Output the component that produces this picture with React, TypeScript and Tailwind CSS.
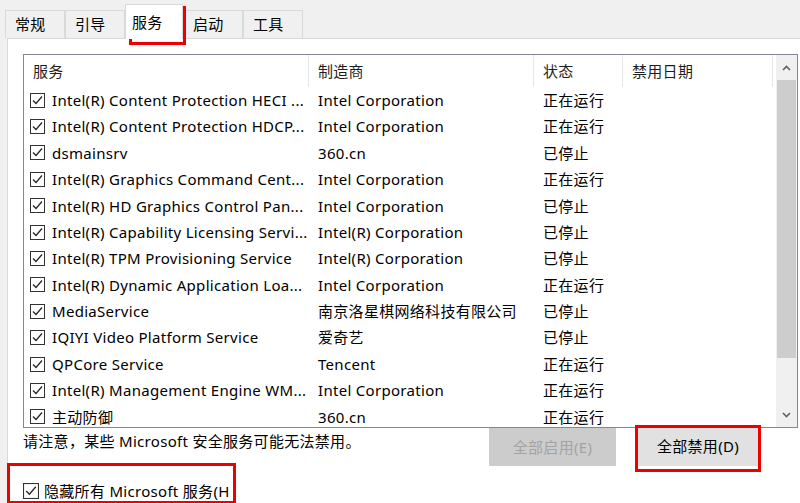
import React from "react"

type Row = { name: string; maker: string; status: string }

const rows: Row[] = [
  { name: "Intel(R) Content Protection HECI ...", maker: "Intel Corporation", status: "正在运行" },
  { name: "Intel(R) Content Protection HDCP...", maker: "Intel Corporation", status: "正在运行" },
  { name: "dsmainsrv", maker: "360.cn", status: "已停止" },
  { name: "Intel(R) Graphics Command Cent...", maker: "Intel Corporation", status: "正在运行" },
  { name: "Intel(R) HD Graphics Control Pan...", maker: "Intel Corporation", status: "已停止" },
  { name: "Intel(R) Capability Licensing Servi...", maker: "Intel(R) Corporation", status: "已停止" },
  { name: "Intel(R) TPM Provisioning Service", maker: "Intel(R) Corporation", status: "已停止" },
  { name: "Intel(R) Dynamic Application Loa...", maker: "Intel Corporation", status: "正在运行" },
  { name: "MediaService", maker: "南京洛星棋网络科技有限公司", status: "已停止" },
  { name: "IQIYI Video Platform Service", maker: "爱奇艺", status: "已停止" },
  { name: "QPCore Service", maker: "Tencent", status: "正在运行" },
  { name: "Intel(R) Management Engine WM...", maker: "Intel Corporation", status: "正在运行" },
  { name: "主动防御", maker: "360.cn", status: "正在运行" },
]

const Check = ({ size = 15 }: { size?: number }) => (
  <svg width={size} height={size} viewBox="0 0 15 15" className="shrink-0">
    <rect x="0.5" y="0.5" width="14" height="14" fill="#fff" stroke="#333" />
    <path d="M3 7.5 L6 10.5 L12 3.5" fill="none" stroke="#222" strokeWidth="1.2" />
  </svg>
)

const tabs = ["常规", "引导", "服务", "启动", "工具"]

export default function App() {
  return (
    <div className="relative h-[503px] w-[800px] overflow-hidden bg-[#f0f0f0] font-['Noto_Sans','Noto_Sans_CJK_SC',sans-serif] text-[15px] tracking-[0.3px] text-black">
      {/* tabs */}
      <div className="flex h-[38px] items-end pl-[5px]">
        {tabs.map((t) =>
          t === "服务" ? (
            <div key={t} className="relative z-10 -mb-px flex h-[35px] w-[58px] items-start border border-b-0 border-[#d9d9d9] bg-white pl-[6px] pt-[6px]">
              {t}
            </div>
          ) : (
            <div key={t} className="flex h-[28px] w-[60px] items-center border border-b-0 border-[#d9d9d9] bg-[#f0f0f0] pl-[9px]">
              {t}
            </div>
          )
        )}
      </div>

      {/* pane */}
      <div className="ml-[7px] h-[470px] border-l border-t border-[#d9d9d9] bg-white pl-[15px] pt-[15px]">
        <div className="flex h-[374px] w-[775px] border border-[#828790]">
          <div className="flex w-[752px] flex-col overflow-hidden">
            <div className="flex h-[32px] shrink-0 items-center text-[#1e1e1e]">
              <div className="flex h-full w-[285px] items-center border-r border-[#e5e5e5] pl-[9px]">服务</div>
              <div className="flex h-full w-[225px] items-center border-r border-[#e5e5e5] pl-[9px]">制造商</div>
              <div className="flex h-full w-[89px] items-center border-r border-[#e5e5e5] pl-[9px]">状态</div>
              <div className="flex h-full w-[150px] items-center border-r border-[#e5e5e5] pl-[9px]">禁用日期</div>
            </div>
            {rows.map((r, i) => (
              <div key={i} className="flex h-[26.4px] shrink-0 items-center whitespace-nowrap">
                <div className="flex w-[285px] items-center gap-[7px] pl-[6px]">
                  <Check />
                  <span>{r.name}</span>
                </div>
                <div className="w-[225px] pl-[9px]">{r.maker}</div>
                <div className="w-[89px] pl-[9px]">{r.status}</div>
                <div className="w-[150px]" />
              </div>
            ))}
          </div>
          {/* scrollbar */}
          <div className="flex w-[21px] flex-col bg-[#f0f0f0]">
            <div className="flex h-[25px] items-center justify-center">
              <svg width="9" height="6" viewBox="0 0 9 6">
                <path d="M1 5 L4.5 1.5 L8 5" fill="none" stroke="#606060" strokeWidth="1.6" />
              </svg>
            </div>
            <div className="mx-[1px] h-[278px] bg-[#cdcdcd]" />
            <div className="flex-1" />
            <div className="flex h-[25px] items-center justify-center">
              <svg width="9" height="6" viewBox="0 0 9 6">
                <path d="M1 1 L4.5 4.5 L8 1" fill="none" stroke="#606060" strokeWidth="1.6" />
              </svg>
            </div>
          </div>
        </div>

        {/* bottom */}
        <div className="flex h-[38px] w-[775px] items-start">
          <div className="pt-[2px]">请注意，某些 Microsoft 安全服务可能无法禁用。</div>
          <div className="ml-auto flex gap-[19px] pr-[37px]">
            <div className="flex h-[38px] w-[127px] items-center justify-center bg-[#cccccc] text-[#a3a3a3]">全部启用(E)</div>
            <div className="mt-[-2px] flex h-[40px] w-[126px] items-center justify-center bg-[#e1e1e1]">全部禁用(D)</div>
          </div>
        </div>
        <div className="-ml-[7px] mt-[14px] flex items-center gap-[5px] pl-[7px]">
          <Check size={16} />
          <span>隐藏所有 Microsoft 服务(H</span>
        </div>
      </div>

      {/* annotation boxes */}
      <div className="pointer-events-none absolute left-[129px] top-[6px] h-[39px] w-[57px] border-[3px] border-[#ee0000]" />
      <div className="pointer-events-none absolute left-[635px] top-[425px] h-[47px] w-[126px] border-[3px] border-[#ee0000]" />
      <div className="pointer-events-none absolute left-[7px] top-[463px] h-[41px] w-[229px] border-[3px] border-[#ee0000]" />
    </div>
  )
}
